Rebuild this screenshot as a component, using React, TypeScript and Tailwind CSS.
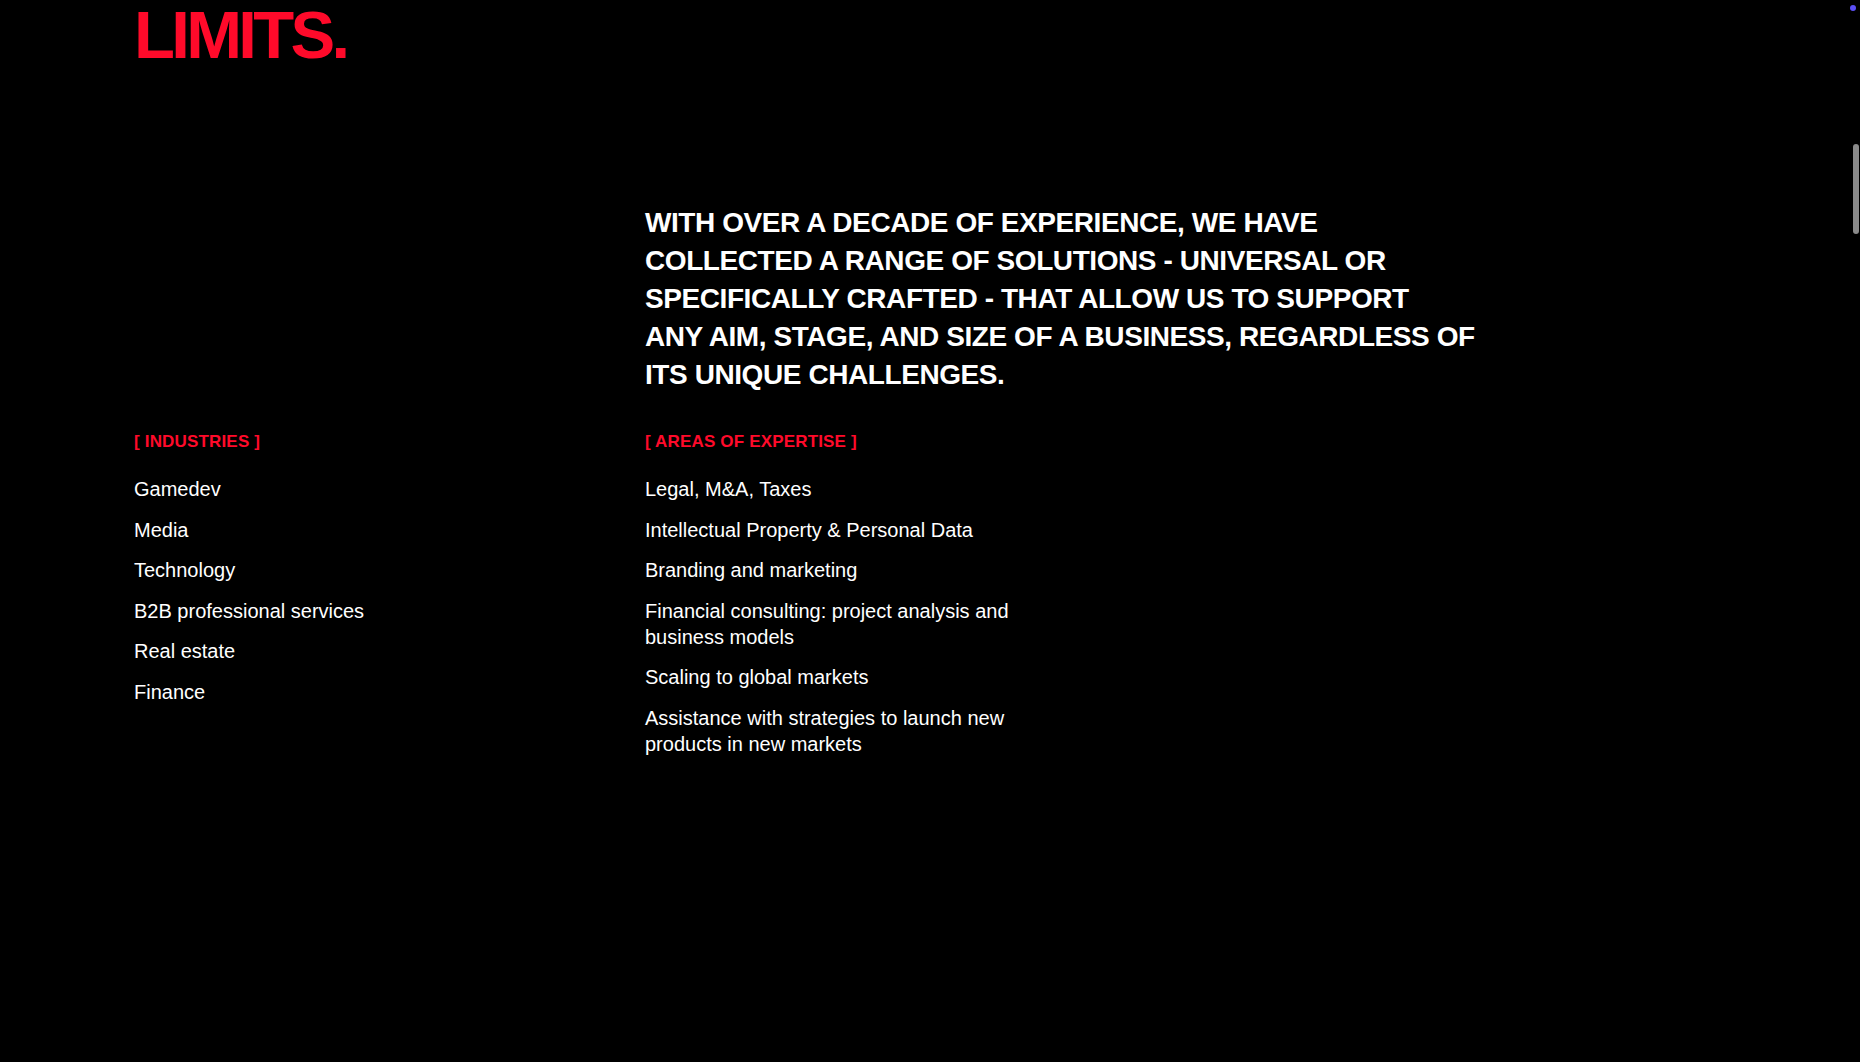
import React from "react"

const INDUSTRIES = ["Gamedev", "Media", "Technology", "B2B professional services", "Real estate", "Finance"]

const EXPERTISE = [
    "Legal, M&A, Taxes",
    "Intellectual Property & Personal Data",
    "Branding and marketing",
    "Financial consulting: project analysis and business models",
    "Scaling to global markets",
    "Assistance with strategies to launch new products in new markets",
]

const SectionLabel = ({ children }: { children: React.ReactNode }) => (
    <div className="text-[17px] leading-[20px] font-bold uppercase tracking-[0.01em] text-[#ff0a2a]">
        [ {children} ]
    </div>
)

const ItemList = ({ items }: { items: string[] }) => (
    <ul className="mt-[24px] flex flex-col gap-[14.6px] text-[20px] leading-[26px] text-white">
        {items.map((item) => (
            <li key={item}>{item}</li>
        ))}
    </ul>
)

export default function App() {
    return (
        <div className="relative h-[1062px] overflow-hidden bg-black font-['Liberation_Sans',Arial,sans-serif]">
            <div className="pl-[134px] pt-px">
                <h2 className="text-[67px] leading-[67px] font-bold tracking-[-0.055em] text-[#ff0a2a]">LIMITS.</h2>

                <div className="mt-[136px] flex">
                    <div className="w-[511px] shrink-0" />
                    <p className="w-[840px] text-[28px] leading-[38px] font-bold uppercase tracking-[-0.015em] text-white">
                        With over a decade of experience, we have<br />
                        collected a range of solutions - universal or<br />
                        specifically crafted - that allow us to support<br />
                        any aim, stage, and size of a business, regardless of<br />
                        its unique challenges.
                    </p>
                </div>

                <div className="mt-[38px] flex">
                    <div className="w-[511px] shrink-0">
                        <SectionLabel>Industries</SectionLabel>
                        <ItemList items={INDUSTRIES} />
                    </div>
                    <div className="w-[375px]">
                        <SectionLabel>Areas of expertise</SectionLabel>
                        <ItemList items={EXPERTISE} />
                    </div>
                </div>
            </div>

            {/* overlay scrollbar + indicator dot */}
            <div className="absolute right-[4px] top-[5px] h-[6px] w-[6px] rounded-full bg-[#5b4ff5]" />
            <div className="absolute right-px top-[144px] h-[90px] w-[6px] rounded-full bg-[#8a8a8a]" />
        </div>
    )
}
